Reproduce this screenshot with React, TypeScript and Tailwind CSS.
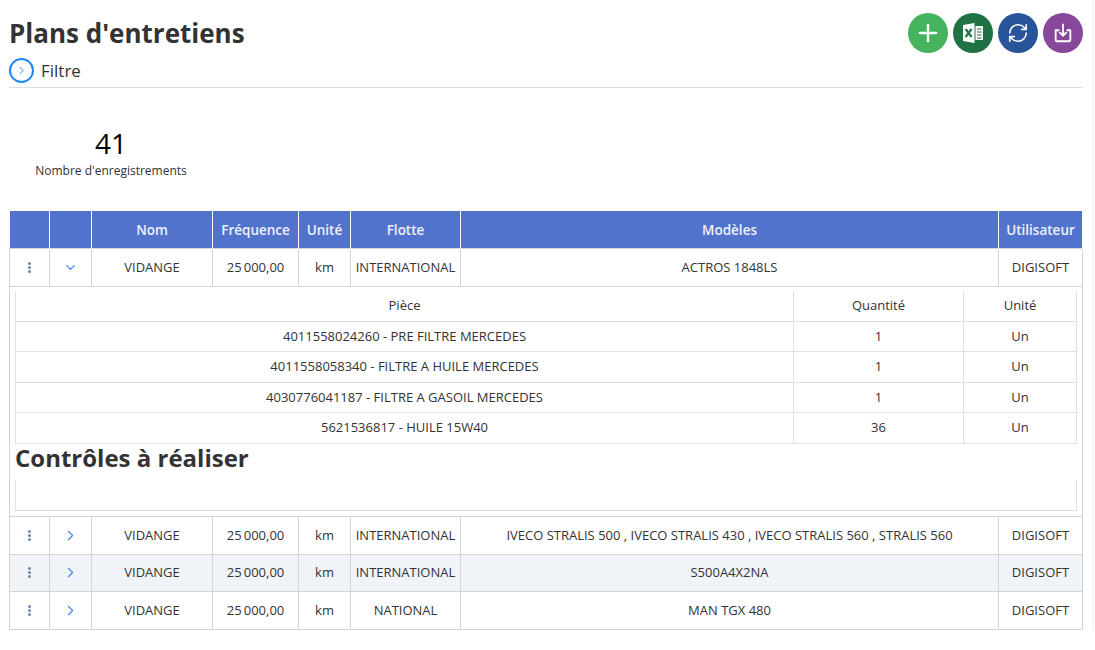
import { ChevronDown, ChevronRight, Plus, RefreshCw } from "lucide-react";

const pieces = [
  { name: "4011558024260 - PRE FILTRE MERCEDES", qty: "1", height: "h-[30px]" },
  { name: "4011558058340 - FILTRE A HUILE MERCEDES", qty: "1", height: "h-[31px]" },
  { name: "4030776041187 - FILTRE A GASOIL MERCEDES", qty: "1", height: "h-[30px]" },
  { name: "5621536817 - HUILE 15W40", qty: "36", height: "h-[31px]" },
];

const rows = [
  { flotte: "INTERNATIONAL", modeles: "IVECO STRALIS 500 , IVECO STRALIS 430 , IVECO STRALIS 560 , STRALIS 560", height: "h-[38px] pt-px", bg: "" },
  { flotte: "INTERNATIONAL", modeles: "S500A4X2NA", height: "h-[37px]", bg: "bg-[#f0f3f8]" },
  { flotte: "NATIONAL", modeles: "MAN TGX 480", height: "h-[38px] pt-px", bg: "" },
];

const headers = ["", "", "Nom", "Fréquence", "Unité", "Flotte", "Modèles", "Utilisateur"];

function Dots() {
  return (
    <div className="mx-auto flex w-[3px] flex-col gap-[1px]">
      <span className="h-[3px] w-[3px] rounded-full bg-[#7385a8]" />
      <span className="h-[3px] w-[3px] rounded-full bg-[#7385a8]" />
      <span className="h-[3px] w-[3px] rounded-full bg-[#7385a8]" />
    </div>
  );
}

function Cols() {
  return (
    <colgroup>
      <col className="w-[40px]" />
      <col className="w-[42px]" />
      <col className="w-[121px]" />
      <col className="w-[86px]" />
      <col className="w-[52px]" />
      <col className="w-[110px]" />
      <col className="w-[538px]" />
      <col className="w-[84px]" />
    </colgroup>
  );
}

function DataRow({ open, flotte, modeles, height, bg }: { open?: boolean; flotte: string; modeles: string; height: string; bg: string }) {
  const cell = `border border-[#d4d4d4] text-center align-middle ${height}`;
  return (
    <tr className={bg}>
      <td className={cell}><Dots /></td>
      <td className={cell}>
        {open ? (
          <ChevronDown className="mx-auto h-[15px] w-[15px] text-[#2f7bf5]" strokeWidth={1.75} />
        ) : (
          <ChevronRight className="mx-auto h-[17px] w-[17px] text-[#3b82f6]" strokeWidth={1.5} />
        )}
      </td>
      <td className={cell}>VIDANGE</td>
      <td className={cell}>25{"\u2009"}000,00</td>
      <td className={cell}>km</td>
      <td className={cell}>{flotte}</td>
      <td className={cell}>{modeles}</td>
      <td className={cell}>DIGISOFT</td>
    </tr>
  );
}

export default function App() {
  return (
    <div className="h-[650px] w-[1095px] overflow-hidden bg-white font-['Open_Sans',sans-serif] text-[13px] text-[#333]">
      <div className="h-[630px] w-[1094px] border-r border-[#f1f1f1] pl-[9px] pr-[10px]">
        {/* Title bar */}
        <div className="flex h-[88px] justify-between border-b border-[#dedede]">
          <div className="pt-[15px]">
            <h1 className="text-[26px] font-bold leading-[37px] text-[#333]">Plans d'entretiens</h1>
            <div className="mt-[6px] flex items-center gap-[7px]">
              <span className="flex h-[25px] w-[25px] items-center justify-center rounded-full border-2 border-[#1e88f0]">
                <ChevronRight className="h-[13px] w-[13px] text-[#1a6fd0]" strokeWidth={1.5} />
              </span>
              <span className="text-[17px] leading-[24px]">Filtre</span>
            </div>
          </div>
          <div className="flex gap-[5px] pt-[13px]">
            <button className="flex h-10 w-10 items-center justify-center rounded-full bg-[#46b35f] text-white">
              <Plus className="h-[28px] w-[28px]" strokeWidth={2} />
            </button>
            <button className="flex h-10 w-10 items-center justify-center rounded-full bg-[#1f7244]">
              <svg viewBox="0 0 24 24" className="h-6 w-6">
                <path d="M2 4 L13.5 2 V22 L2 20 Z" fill="#fff" />
                <path d="M14.5 5 H22 V19 H14.5 Z" fill="#fff" />
                <path d="M16 8 H20.5 M16 11 H20.5 M16 14 H20.5 M16 17 H20.5" stroke="#1f7244" strokeWidth="1.1" />
                <path d="M4.6 8 L10.6 16 M10.6 8 L4.6 16" stroke="#1f7244" strokeWidth="2.1" />
              </svg>
            </button>
            <button className="flex h-10 w-10 items-center justify-center rounded-full bg-[#28549a] text-white">
              <RefreshCw className="h-[22px] w-[22px]" strokeWidth={1.75} />
            </button>
            <button className="flex h-10 w-10 items-center justify-center rounded-full bg-[#87479b] text-white">
              <svg viewBox="0 0 24 24" className="h-[22px] w-[22px]" fill="none" stroke="currentColor" strokeWidth="2">
                <path d="M8 9 H4 V20 a1 1 0 0 0 1 1 H19 a1 1 0 0 0 1 -1 V9 H16" strokeLinejoin="round" />
                <path d="M12 2 V15 M8 11 L12 15 L16 11" />
              </svg>
            </button>
          </div>
        </div>

        {/* Counter */}
        <div className="flex h-[123px] w-[204px] flex-col items-center pt-[36px]">
          <div className="text-[28px] leading-[38px] text-black">41</div>
          <div className="text-[12px] leading-[18px]">Nombre d'enregistrements</div>
        </div>

        {/* Main table */}
        <table className="w-[1074px] table-fixed border-collapse">
          <Cols />
          <thead>
            <tr className="bg-[#5273cb] text-[13.5px] text-[#eef1fa]">
              {headers.map((h, i) => (
                <th key={i} className="h-[37px] border-l border-white pt-px text-center font-semibold first:border-l-0 last:border-r">{h}</th>
              ))}
            </tr>
          </thead>
          <tbody>
            <DataRow open flotte="INTERNATIONAL" modeles="ACTROS 1848LS" height="h-[38px] pt-px" bg="" />
            <tr>
              <td colSpan={8} className="h-[230px] border border-[#d4d4d4] px-[5px] align-top">
                <table className="mt-[4px] w-[1062px] table-fixed border-collapse">
                  <thead>
                    <tr className="h-[31px]">
                      <th className="w-[778px] border border-t-0 border-[#e0e0e0] font-normal">Pièce</th>
                      <th className="w-[170px] border border-t-0 border-[#e0e0e0] font-normal">Quantité</th>
                      <th className="border border-t-0 border-[#e0e0e0] font-normal">Unité</th>
                    </tr>
                  </thead>
                  <tbody>
                    {pieces.map((p) => (
                      <tr key={p.name} className={p.height}>
                        <td className="border border-[#e0e0e0] text-center">{p.name}</td>
                        <td className="border border-[#e0e0e0] text-center">{p.qty}</td>
                        <td className="border border-[#e0e0e0] text-center">Un</td>
                      </tr>
                    ))}
                  </tbody>
                </table>
                <h2 className="text-[24px] font-bold leading-[28px] text-[#333]">Contrôles à réaliser</h2>
                <div className="mt-[8px] h-[31px] w-[1062px] border border-t-0 border-[#e0e0e0]" />
              </td>
            </tr>
            {rows.map((r) => (
              <DataRow key={r.modeles} {...r} />
            ))}
          </tbody>
        </table>
      </div>
    </div>
  );
}
